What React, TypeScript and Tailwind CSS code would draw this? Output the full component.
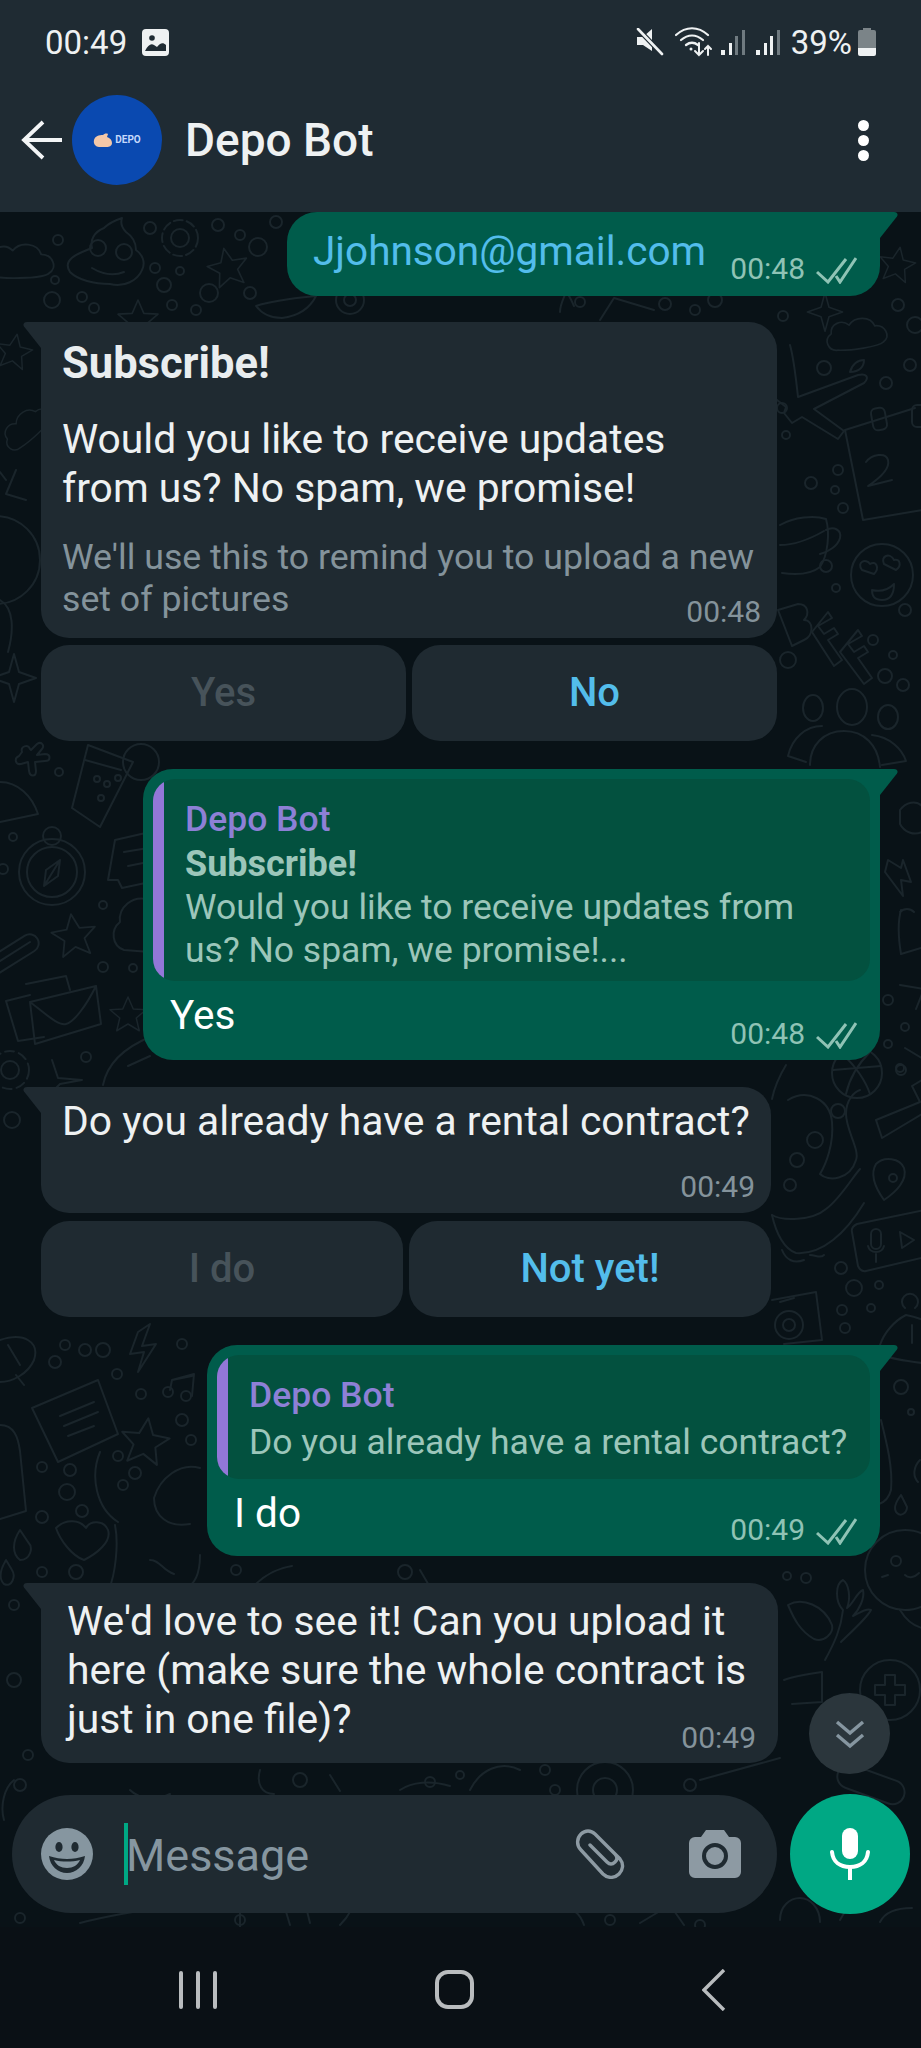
import React from "react";

const LINE = "#1a252b";

// wallpaper doodles, page coordinates
const Star = ({ x, y, r = 24, rot = 0 }: { x: number; y: number; r?: number; rot?: number }) => (
  <path
    transform={`translate(${x} ${y}) rotate(${rot}) scale(${r / 24})`}
    d="M0-24 7-8 24-7 11 4 15 21 0 12-15 21-11 4-24-7-7-8Z"
    strokeLinejoin="round"
  />
);
const Cloud = ({ x, y, s = 1, rot = 0 }: { x: number; y: number; s?: number; rot?: number }) => (
  <path
    transform={`translate(${x} ${y}) rotate(${rot}) scale(${s})`}
    d="M-30 16c-12 0-16-14-6-20 0-12 14-16 22-8 8-10 26-8 30 4 12 0 18 14 8 20-6 5-40 6-54 4Z"
  />
);
const Spark = ({ x, y, s = 1 }: { x: number; y: number; s?: number }) => (
  <path transform={`translate(${x} ${y}) scale(${s})`} d="M0-24 5-6 22 0 5 6 0 24-5 6-22 0-5-6Z" />
);

const DOTS = [
  [58, 240, 5], [150, 228, 6], [218, 225, 6], [240, 235, 5], [258, 247, 9], [276, 222, 6], [55, 280, 4], [52, 300, 8],
  [82, 297, 5], [94, 308, 5], [155, 268, 5], [180, 271, 4], [164, 285, 7], [209, 293, 9], [172, 305, 5], [196, 310, 5],
  [250, 293, 6], [580, 302, 5], [665, 304, 6], [695, 310, 5], [715, 300, 7], [783, 316, 5], [898, 305, 6], [915, 325, 8],
  [824, 368, 7], [886, 383, 6], [910, 365, 6], [782, 408, 5], [786, 435, 4], [838, 470, 5], [811, 483, 6], [835, 490, 4],
  [843, 508, 5], [826, 566, 6], [836, 588, 4], [873, 640, 5], [893, 655, 4], [885, 676, 7], [788, 660, 8], [905, 610, 6],
  [903, 685, 6], [59, 772, 4], [13, 837, 4], [103, 905, 4], [3, 869, 5], [103, 967, 5], [133, 968, 4], [86, 1057, 5], [12, 1120, 8],
  [888, 1000, 5], [905, 1027, 4], [888, 1044, 4], [901, 1070, 5], [838, 1111, 7], [900, 1068, 4],
  [841, 1268, 6], [854, 1288, 8], [879, 1285, 4], [842, 1310, 5], [871, 1308, 4], [845, 1328, 5], [901, 1387, 7], [911, 1412, 3],
  [787, 1576, 4], [806, 1578, 5],
  [65, 1345, 5], [85, 1350, 6], [103, 1350, 7], [55, 1362, 6], [117, 1374, 5],
  [182, 1344, 5], [141, 1394, 5], [182, 1420, 6], [191, 1440, 5], [42, 1467, 5], [70, 1470, 6], [67, 1492, 8], [42, 1517, 6],
  [82, 1511, 6], [118, 1456, 5], [135, 1473, 6], [123, 1485, 5], [42, 1572, 5], [76, 1572, 7], [236, 1570, 5], [405, 1572, 7],
  [20, 1785, 6], [300, 1780, 7], [430, 1782, 5], [460, 1775, 4], [555, 1790, 5], [690, 1785, 6], [545, 1770, 5],
  [240, 1920, 5], [700, 1925, 5], [14, 1680, 7], [14, 1605, 5], [28, 1755, 5], [20, 1918, 5], [610, 1920, 5],
];

const Wallpaper = () => (
  <svg
    className="absolute inset-0 w-[921px] h-[1715px]"
    viewBox="0 212 921 1715"
    fill="none"
    stroke={LINE}
    strokeWidth="2"
    strokeLinecap="round"
    strokeLinejoin="round"
  >
    {DOTS.map(([x, y, r], i) => (
      <circle key={i} cx={x} cy={y} r={r} />
    ))}
    {/* top left */}
    <Cloud x={26} y={262} s={0.95} />
    <path d="M70 272c-8-12 6-18 22-24-2-8 2-16 12-20 6-6 12-8 18-10-2 6 0 10 4 14 6 4 10 10 10 18 6 4 10 12 6 20-4 10-18 18-32 14-16 0-32-4-40-12Z" />
    <circle cx="98" cy="248" r="8" />
    <circle cx="124" cy="252" r="8" />
    <path d="M92 268c10 6 22 8 32 4" />
    <circle cx="180" cy="238" r="9" />
    <circle cx="180" cy="238" r="18" strokeDasharray="9 4" />
    <Star x={228} y={268} r={20} rot={-12} />
    <Star x={138} y={320} r={20} />
    <path d="M256 306c18-6 40-8 60-10-6 12-18 20-34 22-12 0-20-4-26-12Z" />
    <circle cx="350" cy="300" r="14" />
    <circle cx="350" cy="300" r="6" />
    {/* under first bubble, right edge */}
    <path d="M560 312c0-8 4-14 6-20 4 4 6 10 8 14M600 320l14-22 40 12" />
    <Star x={897} y={265} r={18} rot={10} />
    <Spark x={825} y={312} s={0.8} />
    <Cloud x={862} y={334} s={0.85} rot={-6} />
    {/* plane */}
    <path d="M790 345c4 14 6 34 8 52l60-22c8-2 12 2 6 8l-50 26 30 22-6 8-36-22-10 6-8-10 2-6-18-14" />
    <path d="M850 372c2-8 8-12 14-12 0 6-4 12-14 12Z" />
    {/* calendar */}
    <path d="M845 430l70-22M845 430l18 90 60-10" />
    <rect x="872" y="408" width="14" height="22" rx="5" transform="rotate(-10 879 419)" />
    <rect x="912" y="405" width="14" height="22" rx="5" />
    <path d="M866 462c6-8 20-10 22-2s-8 18-20 26l24-6" />
    {/* cup */}
    <path d="M780 525c14-8 34-10 46-6 4 14 2 36-6 48-10 8-24 8-38 6" />
    <path d="M826 530c8-4 16 0 14 8s-12 14-20 16" />
    <path d="M780 545c16 0 30-6 44-14" />
    {/* love face */}
    <circle cx="882" cy="575" r="31" />
    <path d="M862 570c-6-8 4-12 8-6 6-4 10 4 4 10ZM884 564c-4-8 6-12 10-4 6-2 8 6 2 10Z" />
    <path d="M872 590c8 2 16 0 22-6 0 10-4 16-12 16s-10-4-10-10Z" />
    {/* BFF */}
    <path d="M778 610l20-6c10 0 12 10 6 16 10 0 10 16 0 20l-12 6Z" />
    <path d="M812 632l22 34 8-6-14-20 10-6-4-6-10 6-6-8 14-8-4-6ZM840 652l24 32 8-6-14-20 10-6-4-6-10 6-6-8 14-8-4-6Z" />
    {/* left margin top */}
    <Star x={14} y={352} r={18} rot={10} />
    <Cloud x={30} y={424} s={0.75} rot={-40} />
    <path d="M16 470l-10 24 20 6M6 480l-6-8" />
    <circle cx="-4" cy="560" r="44" />
    <path d="M0 600c14 8 14 30 8 52" />
    <Spark x={14} y={678} s={1} />
    {/* plus, dome, drink, compass */}
    <path d="M22 752c-2-6 6-8 8-3l1 1 6-6c4-3 8 1 5 5l-5 6 8-1c6 0 6 7 0 7l-10 1 1 9c0 6-6 6-7 0l-1-9-7 2c-6 1-7-6-2-8Z" />
    <path d="M88 745l45 17-33 65-28-19Z" />
    <path d="M85 760l36 10" />
    <circle cx="97" cy="779" r="3" />
    <circle cx="107" cy="784" r="3" />
    <circle cx="118" cy="778" r="3" />
    <circle cx="101" cy="798" r="3" />
    <circle cx="141" cy="762" r="18" />
    <path d="M0 782c18 0 32 14 38 32L0 822" />
    <circle cx="52" cy="872" r="33" />
    <circle cx="52" cy="872" r="25" />
    <circle cx="52" cy="836" r="9" />
    <path d="M60 860l-16 26 2-16ZM60 860l-2 16-14 10" />
    <path d="M115 840l35-8v50l-28 6-4-8-10 0Z" />
    <path d="M124 852l24-4M128 866l20-4" />
    <path d="M150 900c-18-6-32 8-30 22-10 8-8 24 4 28l26 2" />
    <Star x={74} y={936} r={22} rot={-8} />
    <rect x="-20" y="946" width="62" height="18" rx="9" transform="rotate(-32 11 955)" />
    <path d="M-8 966l38-24" />
    <Star x={128} y={1015} r={18} />
    <path d="M30 995l-24 6 12 40 26-4M70 990l-4-14-40 8" />
    <path d="M30 1002l66-16 5 38-66 20ZM30 1002c16 12 28 24 36 22 8-2 20-18 30-38" />
    <circle cx="10" cy="1070" r="9" />
    <circle cx="10" cy="1070" r="19" strokeDasharray="9 5" />
    <path d="M52 1060l6 18 24 2-22 4-6 6" />
    <path d="M103 1085c4-20 18-36 47-48M128 1066l22-10" />
    {/* people */}
    <ellipse cx="813" cy="708" rx="10" ry="13" />
    <ellipse cx="852" cy="707" rx="15" ry="18" />
    <ellipse cx="888" cy="717" rx="10" ry="12" />
    <path d="M810 765c0-20 14-34 34-34s34 14 36 36" />
    <path d="M822 726c-16 0-30 12-34 30l18 6" />
    <path d="M872 735c18 2 30 14 34 26l-24 4" />
    {/* right margin, mid */}
    <path d="M900 810c6-8 16-10 22-4v26c-8 4-18 0-22-8Z" />
    <path d="M888 860l-3 12 18 24-2-16 10 2-8-22-2 8Z" />
    <path d="M901 910c-4 14-2 32 0 44l20-6M900 912c4-4 10-4 14 0" />
    <path d="M900 985l24 4-8 20" />
    <path d="M905 1048l20 12" />
    {/* globe */}
    <circle cx="857" cy="1073" r="25" />
    <path d="M833 1070l48-4M842 1054c14 12 24 28 28 40M870 1052c-10 10-20 24-24 42" />
    <path d="M786 1065c-6 10-12 24-14 34" />
    {/* tentacle creature */}
    <path d="M788 1100c20-12 42 0 44 22 2 22-6 42-12 52 8 8 30 6 36-14 4-10-10-30-10-46 0-14 8-22 14-24" />
    <circle cx="815" cy="1140" r="8" />
    <circle cx="797" cy="1160" r="7" />
    <circle cx="790" cy="1185" r="6" />
    <path d="M772 1215c10 6 40 6 54-6 14-10 28-34 34-40" />
    <path d="M772 1215c4 18 12 34 24 38 26 2 50-20 68-50" />
    <path d="M782 1250c4 10 12 14 22 10M810 1255c6 0 10 4 14 0" />
    {/* pin + pencil */}
    <path d="M884 1200c-10-14-14-26-8-36 8-8 24-6 28 4 4 12-8 24-20 32Z" />
    <circle cx="893" cy="1178" r="4" />
    <path d="M876 1120l44-18-8-16 10-6M876 1120l6 18 40-24" />
    {/* video card */}
    <path d="M925 1210l-68 14c-4 2-6 4-5 8l6 34c2 4 4 6 8 5l59-14" />
    <rect x="871" y="1229" width="10" height="20" rx="5" />
    <path d="M868 1246c2 8 14 8 16 0M876 1254v8" />
    <path d="M900 1232l14 8-12 8Z" />
    {/* camera */}
    <path d="M772 1300l44-8 6 48-38 4" />
    <circle cx="789" cy="1325" r="14" />
    <circle cx="789" cy="1325" r="6" />
    <path d="M780 1302l14-4" />
    {/* bag */}
    <path d="M880 1345c4-12 14-24 26-30 10 2 20 6 20 6M905 1308a8 8 0 1 1 10 0M912 1325v18" />
    <path d="M882 1355c10 4 24 6 40 8" />
    {/* below second quote */}
    <path d="M881 1420c6 24 12 48 10 70-2 8-6 12-12 14" />
    <path d="M901 1495c-6 8-8 14-4 18 4 4 10 0 10-6Z" />
    <path d="M920 1460c-6 6-8 16-2 22" />
    {/* cat */}
    <circle cx="905" cy="1570" r="40" />
    <circle cx="896" cy="1561" r="5" />
    <path d="M905 1575c4 4 10 2 14-2M882 1577l6-2" />
    <path d="M900 1610c6 10 14 16 22 18" />
    {/* coral */}
    <path d="M825 1660c10-18 16-32 18-50-8-8-8-26 0-30 6 4 8 18 4 28 6-4 10-16 16-18 2 8-4 20-10 26 8-4 14-8 18-6-4 8-22 24-30 32" />
    <path d="M788 1605c14-8 36 0 44 20 2 8-8 18-18 14-14-8-20-20-26-34Z" />
    <path d="M784 1680c10-4 24-6 38-8v30l-30 2" />
    <circle cx="890" cy="1690" r="30" />
    <path d="M885 1675h10v10h10v10h-10v10h-10v-10h-10v-10h10Z" />
    {/* left lower */}
    <path d="M0 1340c24-8 40 2 34 20-6 14-22 22-34 22M24 1385l-8-10M8 1345l12 20" />
    <path d="M138 1332l-8 22 14-2-6 20 18-28-14 2 8-22Z" />
    <path d="M170 1390l2-10 22-6-2 22M172 1380l20-4" />
    <circle cx="168" cy="1392" r="5" />
    <circle cx="186" cy="1396" r="5" />
    <path d="M32 1408l66-28 20 54-60 28Z" />
    <path d="M60 1416l34-14M64 1426l34-14M68 1436l26-10" />
    <Star x={145} y={1442} r={24} rot={8} />
    <path d="M0 1425c14 0 18 12 20 26l6 60-26 8" />
    <path d="M100 1452c-10 24-4 56 18 70M200 1468c-20-6-40 10-46 30 0 18 14 30 36 26" />
    <path d="M115 1525c4 20 0 50-6 64M150 1560c10 0 12 10 24 14M200 1555c0 16-4 30-16 34" />
    <path d="M20 1530c-8 12-8 24 0 30 10 0 14-12 8-18ZM56 1528c10-10 24-8 30 0 4-8 18-8 22 2 4 12-12 24-24 30-12-4-24-20-28-32Z" />
    <path d="M6 1560c-6 10-8 18-2 24 8 4 12-8 8-14Z" />
    <path d="M250 1590c14-16 28-22 42-24M420 1570l14 24" />
    <path d="M14 1780c-10 8-14 26-10 40M130 1790c10 10 28 10 40 4" />
    {/* around the input */}
    <path d="M260 1770c-4 14 2 24 14 24M330 1775l10 16M470 1790c10-20 30-30 50-20" />
    <circle cx="605" cy="1790" r="28" />
    <circle cx="605" cy="1790" r="12" />
    <path d="M700 1780l80-22" />
    <path d="M400 1790c12-8 30-10 50-4" />
    <rect x="836" y="1772" width="70" height="24" rx="12" transform="rotate(20 870 1784)" />
    <path d="M80 1923c30-8 70-14 100-18M240 1905l0 22M290 1925l-6-20 20-6 6 24M340 1925c10-10 14-20 14-28M560 1905c12 2 20 8 24 20M640 1923l30-18 14 20M780 1920c0-14 10-22 20-22s20 10 20 24M840 1920l14-24M880 1922c6-12 20-14 32-14" />
  </svg>
);

const OutTail = () => (
  <svg className="absolute -right-[18px] top-0 w-[18px] h-[26px]" viewBox="0 0 18 26">
    <path d="M0 0h14c3 0 4.500 2.500 3 4.500L0 26Z" fill="#005c4b" />
  </svg>
);

const InTail = () => (
  <svg className="absolute -left-[18px] top-0 w-[18px] h-[26px]" viewBox="0 0 18 26">
    <path d="M18 0H4C1 0-.5 2.500 1 4.500L18 26Z" fill="#1f2a31" />
  </svg>
);

const Ticks = () => (
  <svg className="w-[41px] h-[27px] ml-[11px] shrink-0" viewBox="0 0 41 27" fill="none" stroke="#8fc3b5" strokeWidth="3">
    <path d="M1 15l11 10L30 2M20 19l4 6L40 1" />
  </svg>
);

const Stamp = ({ time, out = false }: { time: string; out?: boolean }) => (
  <div className={`flex items-end justify-end leading-[30px] text-[30px] ${out ? "text-[#8fc3b5]" : "text-[#84939b]"}`}>
    <span>{time}</span>
    {out && <Ticks />}
  </div>
);

const ReplyButton = ({ label, off = false }: { label: string; off?: boolean }) => (
  <div
    className={`flex-1 h-[96px] rounded-[28px] bg-[#1f2a31] flex items-center justify-center text-[40px] font-medium ${
      off ? "text-[#47535a]" : "text-[#53bdeb]"
    }`}
  >
    {label}
  </div>
);

const Quote = ({ children, h }: { children: React.ReactNode; h: string }) => (
  <div className={`relative rounded-[22px] bg-[#03513f] overflow-hidden pl-[32px] pr-[12px] ${h}`}>
    <div className="absolute left-0 top-0 bottom-0 w-[11px] bg-[#9277d8]" />
    <div className="text-[35.500px] leading-[46px] pt-[17px] font-medium text-[#8d80d6]">Depo Bot</div>
    {children}
  </div>
);

const StatusIcons = () => (
  <div className="flex items-center">
    {/* mute */}
    <svg className="w-[28px] h-[28px]" viewBox="0 0 28 28" fill="#eef1f2">
      <path d="M1 9h6l9-8v22L7 17H1Z" />
      <path d="M1 0l25 26" stroke="#1f2b33" strokeWidth="5" />
      <path d="M2 1l24 25" stroke="#eef1f2" strokeWidth="2.600" strokeLinecap="round" />
    </svg>
    {/* wifi with up/down arrows */}
    <svg className="w-[38px] h-[30px] ml-[11px]" viewBox="0 0 38 30" fill="none" stroke="#eef1f2" strokeWidth="2.200" strokeLinecap="round">
      <path d="M1 8c10-9 22-9 32 0M6 13c7-6 15-6 22 0M11 18c4-3 8-3 12 0" />
      <circle cx="16" cy="22" r="1.500" fill="#eef1f2" stroke="none" />
      <path d="M24 16v12M20 24l4 4 4-4M33 28V19M30 22l3-3 3 3" strokeWidth="2" />
    </svg>
    {/* signal bars */}
    <svg className="w-[24px] h-[25px] ml-[8px]" viewBox="0 0 24 25">
      <rect x="0" y="20" width="4" height="5" fill="#eef1f2" />
      <rect x="8" y="13" width="3" height="12" fill="#eef1f2" />
      <rect x="14" y="6" width="3" height="19" fill="#6f7a80" />
      <rect x="21" y="0" width="3" height="25" fill="#6f7a80" />
    </svg>
    <svg className="w-[24px] h-[25px] ml-[11px]" viewBox="0 0 24 25">
      <rect x="0" y="20" width="4" height="5" fill="#eef1f2" />
      <rect x="8" y="13" width="3" height="12" fill="#eef1f2" />
      <rect x="14" y="6" width="3" height="19" fill="#eef1f2" />
      <rect x="21" y="0" width="3" height="25" fill="#6f7a80" />
    </svg>
    <span className="text-[33px] leading-none ml-[11px] text-[#eef1f2]">39%</span>
    {/* battery */}
    <svg className="w-[18px] h-[28px] ml-[6px]" viewBox="0 0 18 28">
      <path d="M5 0h8v2h3a2 2 0 0 1 2 2v16H0V4a2 2 0 0 1 2-2h3Z" fill="#7b8488" />
      <path d="M0 20h18v6a2 2 0 0 1-2 2H2a2 2 0 0 1-2-2Z" fill="#eef1f2" />
    </svg>
  </div>
);

export default function App() {
  return (
    <div className="w-[921px] h-[2048px] flex flex-col overflow-hidden bg-[#091217] text-[#e9edef] font-['Roboto',sans-serif]">
      {/* status bar + chat header */}
      <header className="h-[212px] shrink-0 bg-[#1f2b33] flex flex-col">
        <div className="h-[84px] flex items-center justify-between pl-[45px] pr-[45px]">
          <div className="flex items-center">
            <span className="text-[33px] leading-none text-[#eef1f2]">00:49</span>
            <svg className="w-[27px] h-[27px] ml-[15px]" viewBox="0 0 27 27">
              <rect width="27" height="27" rx="4" fill="#eef1f2" />
              <circle cx="10" cy="9" r="2.800" fill="#1f2b33" />
              <path d="M3 22c3-6 6-8 9-6l3 2c3-4 6-5 9-2v6H5Z" fill="#1f2b33" />
            </svg>
          </div>
          <StatusIcons />
        </div>
        <div className="flex-1 flex items-center pl-[21px] pr-[52px] pb-[16px]">
          <svg className="w-[42px] h-[42px]" viewBox="0 0 42 42" fill="none" stroke="#f3f5f6" strokeWidth="3.800">
            <path d="M41 21H4M22 3 3 21l19 18" />
          </svg>
          <div className="w-[90px] h-[90px] rounded-full bg-[#0a49b0] ml-[9px] flex items-center justify-center">
            <svg className="w-[20px] h-[15px]" viewBox="0 0 20 15">
              <path d="M1 7c1-4 5-5 9-5 1-1 3-2 5-1l-1 3c3 1 5 3 5 6s-3 4-5 4H6C3 14 0 11 1 7Z" fill="#f4c8a8" />
            </svg>
            <span className="text-[10px] font-bold text-[#c5d8fb] ml-[2px] leading-none">DEPO</span>
          </div>
          <span className="text-[46px] font-medium leading-none ml-[23px] text-[#eef1f2]">Depo Bot</span>
          <div className="ml-auto flex flex-col gap-[4px]">
            <span className="w-[11px] h-[11px] rounded-full bg-white" />
            <span className="w-[11px] h-[11px] rounded-full bg-white" />
            <span className="w-[11px] h-[11px] rounded-full bg-white" />
          </div>
        </div>
      </header>

      {/* chat */}
      <main className="relative h-[1715px] shrink-0 overflow-hidden">
        <Wallpaper />
        <div className="relative flex flex-col h-full">
          <div className="relative self-end mr-[41px] w-[593px] h-[84px] rounded-l-[30px] rounded-br-[30px] bg-[#005c4b] pl-[26px] pr-[23px] flex justify-between items-start">
            <span className="text-[40.500px] leading-[48px] pt-[15px] text-[#53bdeb]">Jjohnson@gmail.com</span>
            <div className="pt-[42px]">
              <Stamp time="00:48" out />
            </div>
            <OutTail />
          </div>

          <div className="relative ml-[41px] mt-[26px] w-[736px] h-[316px] rounded-r-[28px] rounded-bl-[28px] bg-[#1f2a31] pl-[21px] pr-[16px] pt-[18px]">
            <div className="text-[43.500px] font-bold leading-[48px]">Subscribe!</div>
            <div className="text-[40.800px] leading-[49px] mt-[27px] text-[#eef1f2]">
              Would you like to receive updates
              <br />
              from us? No spam, we promise!
            </div>
            <div className="text-[35.700px] leading-[42px] mt-[23px] text-[#84939b]">
              We'll use this to remind you to upload a new
              <br />
              set of pictures
            </div>
            <div className="-mt-[23px]">
              <Stamp time="00:48" />
            </div>
            <InTail />
          </div>
          <div className="flex gap-[6px] ml-[41px] mt-[7px] w-[736px]">
            <ReplyButton label="Yes" off />
            <ReplyButton label="No" />
          </div>

          <div className="relative self-end mr-[41px] mt-[28px] w-[737px] h-[291px] rounded-l-[30px] rounded-br-[30px] bg-[#005c4b] p-[10px]">
            <Quote h="h-[202px]">
              <div className="text-[36px] font-bold leading-[44px] text-[#9cc6ba]">Subscribe!</div>
              <div className="text-[35.500px] leading-[43px] text-[#9cc6ba]">
                Would you like to receive updates from
                <br />
                us? No spam, we promise!...
              </div>
            </Quote>
            <div className="flex justify-between items-start pl-[17px] pr-[13px]">
              <span className="text-[40.500px] leading-[48px] pt-[10px] text-white">Yes</span>
              <div className="pt-[38px]">
                <Stamp time="00:48" out />
              </div>
            </div>
            <OutTail />
          </div>

          <div className="relative ml-[41px] mt-[27px] w-[730px] h-[126px] rounded-r-[28px] rounded-bl-[28px] bg-[#1f2a31] pl-[21px] pr-[16px] pt-[10px]">
            <div className="text-[40.800px] leading-[48px] text-[#eef1f2]">Do you already have a rental contract?</div>
            <div className="mt-[27px]">
              <Stamp time="00:49" />
            </div>
            <InTail />
          </div>
          <div className="flex gap-[6px] ml-[41px] mt-[8px] w-[730px]">
            <ReplyButton label="I do" off />
            <ReplyButton label="Not yet!" />
          </div>

          <div className="relative self-end mr-[41px] mt-[28px] w-[673px] h-[211px] rounded-l-[30px] rounded-br-[30px] bg-[#005c4b] p-[10px]">
            <Quote h="h-[124px]">
              <div className="text-[35.500px] leading-[42px] mt-[3px] text-[#9cc6ba]">Do you already have a rental contract?</div>
            </Quote>
            <div className="flex justify-between items-start pl-[17px] pr-[13px]">
              <span className="text-[40.500px] leading-[48px] pt-[10px] text-white">I do</span>
              <div className="pt-[36px]">
                <Stamp time="00:49" out />
              </div>
            </div>
            <OutTail />
          </div>

          <div className="relative ml-[41px] mt-[27px] w-[737px] h-[180px] rounded-r-[28px] rounded-bl-[28px] bg-[#1f2a31] pl-[26px] pt-[14px]">
            <div className="text-[40.800px] leading-[49px] text-[#eef1f2]">
              We'd love to see it! Can you upload it
              <br />
              here (make sure the whole contract is
              <br />
              just in one file)?
            </div>
            <div className="-mt-[21px] pr-[22px]">
              <Stamp time="00:49" />
            </div>
            <InTail />
          </div>

          {/* jump to bottom */}
          <div className="absolute left-[809px] top-[1481px] w-[81px] h-[81px] rounded-full bg-[#2b363c] flex items-center justify-center">
            <svg className="w-[32px] h-[30px]" viewBox="0 0 32 30" fill="none" stroke="#8696a0" strokeWidth="3.400">
              <path d="M3 3l13 11L29 3M3 16l13 11 13-11" />
            </svg>
          </div>

          {/* composer */}
          <div className="flex items-center ml-[12px] mt-[31px] w-[898px]">
            <div className="w-[765px] h-[118px] rounded-[59px] bg-[#1f2a31] flex items-center pl-[29px] pr-[36px]">
              <svg className="w-[52px] h-[52px] shrink-0" viewBox="0 0 52 52">
                <circle cx="26" cy="26" r="26" fill="#8696a0" />
                <ellipse cx="18" cy="19" rx="3.600" ry="5" fill="#1f2a31" />
                <ellipse cx="34" cy="19" rx="3.600" ry="5" fill="#1f2a31" />
                <path d="M8 28c12 4 24 4 36 0-1 10-9 17-18 17S9 38 8 28Z" fill="#1f2a31" />
                <path d="M13 32c8 2 18 2 26 0-2 5-7 8-13 8s-11-3-13-8Z" fill="#8696a0" />
              </svg>
              <div className="w-[4px] h-[62px] bg-[#00a884] ml-[31px]" />
              <span className="text-[45px] leading-none text-[#8696a0] ml-[-2px] pt-[2px]">Message</span>
              <svg className="w-[54px] h-[50px] ml-auto" viewBox="0 0 54 50" fill="none" stroke="#8d9aa3" strokeWidth="3.400" strokeLinecap="round">
                <path d="M27 12l18 18c4 5 3 11-1 15s-11 5-16 0L6 21C1 16 2 9 6 5s10-4 14 0l20 20c3 3 2 6 0 8s-5 3-8 0L15 16" />
              </svg>
              <svg className="w-[52px] h-[48px] ml-[60px]" viewBox="0 0 52 48">
                <path d="M17 0h18l5 7h6a6 6 0 0 1 6 6v29a6 6 0 0 1-6 6H6a6 6 0 0 1-6-6V13a6 6 0 0 1 6-6h6Z" fill="#8d9aa3" />
                <circle cx="26" cy="26" r="11" fill="none" stroke="#1f2a31" strokeWidth="4" />
              </svg>
            </div>
            <div className="w-[120px] h-[120px] rounded-full bg-[#00a884] ml-[13px] flex items-center justify-center">
              <svg className="w-[40px] h-[52px]" viewBox="0 0 40 52" fill="none">
                <rect x="12" y="0" width="16" height="31" rx="8" fill="#fff" />
                <path d="M2 24c1 10 8 15 18 15s17-5 18-15" stroke="#fff" strokeWidth="4" strokeLinecap="round" />
                <path d="M20 38v14" stroke="#fff" strokeWidth="4" />
              </svg>
            </div>
          </div>
        </div>
      </main>

      {/* android nav */}
      <nav className="flex-1 bg-[#0a1015] flex items-center pt-[4px]">
        <div className="flex gap-[13px] ml-[179px]">
          <span className="w-[4px] h-[38px] rounded-sm bg-[#b9bcbe]" />
          <span className="w-[4px] h-[38px] rounded-sm bg-[#b9bcbe]" />
          <span className="w-[4px] h-[38px] rounded-sm bg-[#b9bcbe]" />
        </div>
        <div className="w-[39px] h-[39px] ml-[218px] rounded-[13px] border-[4px] border-[#b9bcbe]" />
        <svg className="w-[24px] h-[42px] ml-[228px]" viewBox="0 0 24 42" fill="none" stroke="#b9bcbe" strokeWidth="3.400">
          <path d="M22 1 2 21l20 20" />
        </svg>
      </nav>
    </div>
  );
}
